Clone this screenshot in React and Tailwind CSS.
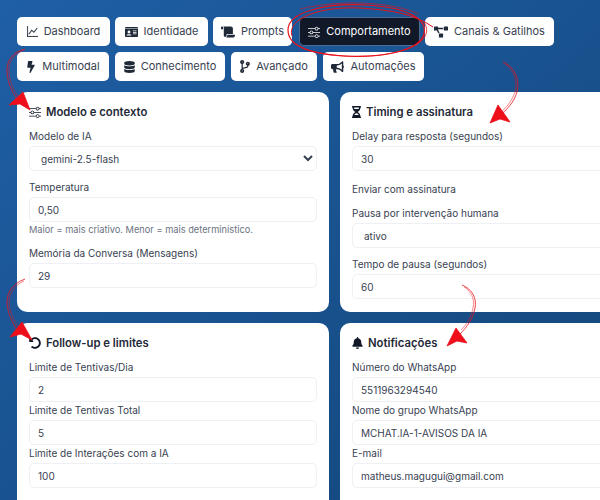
import React from "react";
import { BsGraphUp, BsSliders } from "react-icons/bs";
import {
  FaScroll,
  FaCodeBranch,
  FaIdCard,
  FaProjectDiagram,
  FaBolt,
  FaDatabase,
  FaBullhorn,
  FaHourglassHalf,
  FaUndoAlt,
  FaBell,
} from "react-icons/fa";

const Tab = ({ icon: Icon, label, active, width, iconClass = "w-[12px] h-[12px]" }) => (
  <button
    className={`h-[29px] flex items-center justify-center gap-[6px] rounded-[5px] text-[11px] ${width} ${
      active
        ? "bg-[#111827] text-white border border-[#4b6a94]"
        : "bg-white text-[#374151]"
    }`}
  >
    <Icon className={`${iconClass} ${active ? "text-white" : "text-[#1f2937]"}`} />
    {label}
  </button>
);

const Field = ({ label, value, className = "" }) => (
  <div className={className}>
    <label className="block h-[16px] leading-[16px] text-[10px] text-[#374151] mb-[2px]">
      {label}
    </label>
    <input
      readOnly
      value={value}
      className="block w-full h-[25px] px-[8px] rounded-[5px] border border-[#eef0f3] bg-white text-[10px] text-[#374151] outline-none"
    />
  </div>
);

const SelectField = ({ label, value, className = "" }) => (
  <div className={className}>
    <label className="block h-[16px] leading-[16px] text-[10px] text-[#374151] mb-[2px]">
      {label}
    </label>
    <select
      defaultValue={value}
      className="block w-full h-[25px] pl-[7px] pr-[3px] rounded-[5px] border border-[#eef0f3] bg-white text-[10px] text-[#374151] outline-none"
    >
      <option>{value}</option>
    </select>
  </div>
);

const Card = ({ icon: Icon, title, iconClass = "w-[12px] h-[12px]", children }) => (
  <section className="bg-white rounded-[10px] px-[12px] h-[220px]">
    <h3 className="flex items-center gap-[5px] pt-[4px] h-[36px] text-[11.3px] font-semibold text-[#1f2937]">
      <Icon className={`${iconClass} text-[#111827]`} />
      {title}
    </h3>
    {children}
  </section>
);

// red marker scribbles drawn on top of the screenshot
const Scribbles = () => (
  <svg
    className="absolute inset-0 pointer-events-none"
    width="600"
    height="500"
    viewBox="0 0 600 500"
    fill="none"
    stroke="#e8121c"
  >
    <path d="M25 49C12 52 6 62 7 72C8 84 12 92 17 99" strokeWidth="0.8" />
    <path d="M24 50C13 54 8 63 9 72C10 83 14 91 19 98" strokeWidth="0.5" />
    <path d="M9 105L23 92L30 110L20 104Z" fill="#ee0f1b" strokeWidth="0.8" />

    <path d="M25 279C12 284 7 292 7 303C8 314 12 322 17 330" strokeWidth="0.8" />
    <path d="M24 281C13 286 9 294 9 303C10 313 14 321 19 328" strokeWidth="0.5" />
    <path d="M10 337L22 322L32 340L21 334Z" fill="#ee0f1b" strokeWidth="0.8" />

    <path d="M288 30C288 12 325 3 365 5C405 7 428 18 424 34C420 50 385 58 345 56C310 54 288 46 288 30Z" strokeWidth="1.2" />
    <path d="M292 36C286 18 322 6 360 8C392 10 414 14 433 27" strokeWidth="1" />
    <path d="M296 44C318 60 395 62 420 42C428 36 428 28 424 22" strokeWidth="0.8" />
    <path d="M300 9C340 -1 395 2 418 14" strokeWidth="0.6" />

    <path d="M503 62C515 67 520 80 517 92C514 102 507 110 499 116" strokeWidth="0.8" />
    <path d="M505 64C514 70 518 81 515 92C512 101 506 108 500 113" strokeWidth="0.5" />
    <path d="M490 123L498 105L510 122L500 119Z" fill="#ee0f1b" strokeWidth="0.8" />

    <path d="M462 285C472 289 477 298 475 308C473 319 467 327 460 334" strokeWidth="0.8" />
    <path d="M464 287C471 291 475 299 473 308C471 318 466 325 461 330" strokeWidth="0.5" />
    <path d="M447 346L456 328L467 343L457 341Z" fill="#ee0f1b" strokeWidth="0.8" />
  </svg>
);

const App = () => {
  return (
    <div className="relative w-[600px] h-[500px] overflow-hidden bg-linear-to-br from-[#1f5fa6] to-[#134679] pt-[17px] pl-[17px] font-['Inter',sans-serif]">
      {/* Tabs */}
      <div className="flex flex-col gap-[6px]">
        <div className="flex gap-[5px]">
          <Tab icon={BsGraphUp} label="Dashboard" width="w-[93px]" iconClass="w-[11px] h-[11px] stroke-current stroke-[0.5]" />
          <Tab icon={FaIdCard} label="Identidade" width="w-[93px]" iconClass="w-[13px] h-[12px]" />
          <Tab icon={FaScroll} label="Prompts" width="w-[79px]" iconClass="w-[14px] h-[12px]" />
          <Tab icon={BsSliders} label="Comportamento" width="w-[121px] ml-[2px]" active />
          <Tab icon={FaProjectDiagram} label="Canais & Gatilhos" width="w-[129px]" iconClass="w-[14px] h-[12px]" />
        </div>
        <div className="flex gap-[6px]">
          <Tab icon={FaBolt} label="Multimodal" width="w-[92px]" iconClass="w-[10px] h-[12px]" />
          <Tab icon={FaDatabase} label="Conhecimento" width="w-[110px]" iconClass="w-[11px] h-[12px]" />
          <Tab icon={FaCodeBranch} label="Avançado" width="w-[86px]" iconClass="w-[10px] h-[13px]" />
          <Tab icon={FaBullhorn} label="Automações" width="w-[101px]" iconClass="w-[13px] h-[12px]" />
        </div>
      </div>

      {/* Settings cards */}
      <div className="grid grid-cols-[312px_312px] gap-[11px] mt-[11px]">
        <Card icon={BsSliders} title="Modelo e contexto">
          <SelectField label="Modelo de IA" value="gemini-2.5-flash" />
          <Field label="Temperatura" value="0,50" className="mt-[8px]" />
          <p className="h-[16px] leading-[16px] text-[9.25px] text-[#6b7280]">
            Maior = mais criativo. Menor = mais determinístico.
          </p>
          <Field label="Memória da Conversa (Mensagens)" value="29" className="mt-[7px]" />
        </Card>

        <Card icon={FaHourglassHalf} title="Timing e assinatura" iconClass="w-[9px] h-[12px]">
          <Field label="Delay para resposta (segundos)" value="30" />
          <p className="mt-[10px] h-[16px] leading-[16px] text-[10px] text-[#374151]">
            Enviar com assinatura
          </p>
          <SelectField label="Pausa por intervenção humana" value="ativo" className="mt-[8px]" />
          <Field label="Tempo de pausa (segundos)" value="60" className="mt-[8px]" />
        </Card>

        <Card icon={FaUndoAlt} title="Follow-up e limites">
          <Field label="Limite de Tentivas/Dia" value="2" />
          <Field label="Limite de Tentivas Total" value="5" />
          <Field label="Limite de Interações com a IA" value="100" />
        </Card>

        <Card icon={FaBell} title="Notificações" iconClass="w-[11px] h-[12px]">
          <Field label="Número do WhatsApp" value="5511963294540" />
          <Field label="Nome do grupo WhatsApp" value="MCHAT.IA-1-AVISOS DA IA" />
          <Field label="E-mail" value="matheus.magugui@gmail.com" />
        </Card>
      </div>

      <Scribbles />
    </div>
  );
};

export default App;
